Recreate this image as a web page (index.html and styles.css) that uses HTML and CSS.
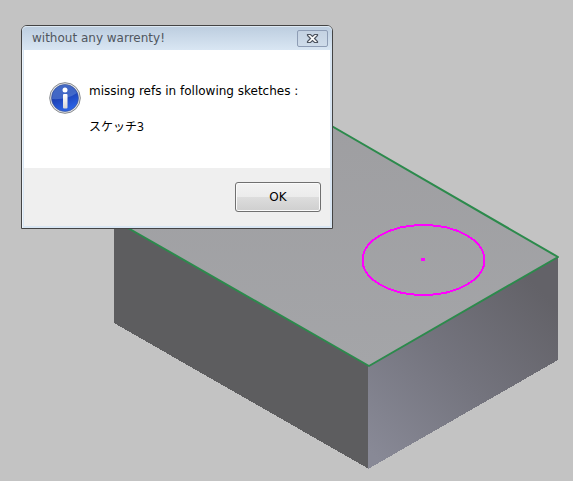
FILE: index.html
```html
<!DOCTYPE html>
<html lang="en">
<head>
  <meta charset="UTF-8">
  <title>without any warrenty!</title>
  <link rel="stylesheet" href="styles.css">
</head>
<body>
  <svg class="model" viewBox="0 0 573 481" preserveAspectRatio="xMinYMin meet" aria-hidden="true">
    <defs>
      <linearGradient id="topFace" x1="0" y1="0" x2="0" y2="1">
        <stop offset="0" stop-color="#9e9ea1"/>
        <stop offset="1" stop-color="#a4a5a8"/>
      </linearGradient>
      <linearGradient id="sideFace" gradientUnits="userSpaceOnUse" x1="369" y1="450" x2="540" y2="290">
        <stop offset="0" stop-color="#888996"/>
        <stop offset="0.5" stop-color="#74747e"/>
        <stop offset="1" stop-color="#636268"/>
      </linearGradient>
    </defs>
    <polygon fill="url(#topFace)" points="114,220 304,110 558,257 369,366"/>
    <polygon fill="#5d5d5f" points="114,220 369,366 369,469 114,323" shape-rendering="crispEdges"/>
    <polygon fill="url(#sideFace)" points="368,366 558,257 558,360 368,469" shape-rendering="crispEdges"/>
    <polygon class="edge" points="114,220 304,110 558,257 369,366"/>
    <ellipse class="sketch" cx="423.5" cy="260" rx="61" ry="35"/>
    <rect fill="#ff00ff" x="421" y="258" width="4" height="3"/>
  </svg>

  <div class="dialog" role="dialog" aria-labelledby="title">
    <div class="titlebar">
      <span id="title">without any warrenty!</span>
      <button class="close" type="button" aria-label="Close">
        <svg width="13" height="11" viewBox="0 0 13 11">
          <path d="M1.5 1.5h3l2 2 2-2h3v1l-3 3 3 3v1h-3l-2-2-2 2h-3v-1l3-3-3-3z" fill="#fff" stroke="#4e5561" stroke-width="1.2"/>
        </svg>
      </button>
    </div>
    <div class="content">
      <svg class="icon" width="32" height="32" viewBox="0 0 32 32" aria-hidden="true">
        <defs>
          <linearGradient id="blue" x1="0" y1="0" x2="0.4" y2="1">
            <stop offset="0" stop-color="#1f48b0"/>
            <stop offset="0.5" stop-color="#1b3fb4"/>
            <stop offset="1" stop-color="#2a62e4"/>
          </linearGradient>
          <linearGradient id="stem" x1="0" y1="0" x2="0" y2="1">
            <stop offset="0" stop-color="#fff"/>
            <stop offset="1" stop-color="#d4d4d6"/>
          </linearGradient>
        </defs>
        <circle cx="16" cy="16" r="15.3" fill="#e4e6e8" stroke="#85888c"/>
        <circle cx="16" cy="16" r="13.5" fill="url(#blue)" stroke="#3c5391" stroke-width="0.6"/>
        <path d="M3 17A13 13 0 0 1 28 11Q18 18 3 17z" fill="#7096dc" opacity="0.45"/>
        <circle cx="16" cy="8" r="2.5" fill="#fff"/>
        <rect x="14" y="12" width="4.5" height="14.5" rx="1" fill="url(#stem)"/>
      </svg>
      <div class="message">
        <p>missing refs in following sketches :</p>
        <p class="name" lang="ja">スケッチ3</p>
      </div>
    </div>
    <div class="footer">
      <button class="ok" type="button">OK</button>
    </div>
  </div>
</body>
</html>
```

FILE: styles.css
```css
body {
  margin: 0;
  min-height: 100vh;
  background-color: #c3c3c3;
  font-family: "DejaVu Sans", "Noto Sans CJK JP", sans-serif;
  font-size: 12px;
  line-height: 18px;
  color: #000;
}

.model {
  display: block;
  width: 100%;
  height: 100vh;
}

.edge {
  fill: none;
  stroke: #2c8a4c;
  stroke-width: 2;
  stroke-linejoin: round;
}

.sketch {
  fill: none;
  stroke: #ff00ff;
  stroke-width: 2;
  shape-rendering: crispEdges;
}

/* message box floating over the model */
.dialog {
  position: absolute;
  top: 25px;
  left: 21px;
  box-sizing: border-box;
  width: 312px;
  padding: 0 2px 2px;
  border: 1px solid #444;
  border-radius: 6px 6px 0 0;
  background-color: #d9e6f3;
  box-shadow: inset 1px 0 #eef5fb;
}

.titlebar {
  display: flex;
  justify-content: space-between;
  align-items: center;
  height: 24px;
  margin: 0 -2px;
  padding: 0 4px 0 10px;
  border-radius: 5px 5px 0 0;
  background: linear-gradient(#bccddf, #d9e6f3);
  box-shadow: inset 0 1px #dde8f2;
  color: #50565e;
}

.close {
  display: flex;
  justify-content: center;
  align-items: center;
  width: 31px;
  height: 17px;
  padding: 0;
  border: 1px solid #8e9db5;
  border-radius: 2px;
  background: linear-gradient(#c4d2e2, #cfdcea);
}

.content {
  display: flex;
  gap: 8px;
  padding: 32px 25px;
  background-color: #fff;
}

.message {
  height: 54px;
}

.message p {
  margin: 0 0 18px;
}

.message .name {
  font-family: "Noto Sans", "Noto Sans CJK JP", sans-serif;
}

.footer {
  display: flex;
  justify-content: flex-end;
  padding: 14px 9px;
  background-color: #efefef;
}

.ok {
  width: 86px;
  height: 30px;
  padding: 0;
  border: 1px solid #707070;
  border-radius: 3px;
  background: linear-gradient(#f2f2f2, #ebebeb 50%, #dddddd 50%, #cfcfcf);
  box-shadow: inset 0 0 0 1px #fafafa;
  font: inherit;
}
```
